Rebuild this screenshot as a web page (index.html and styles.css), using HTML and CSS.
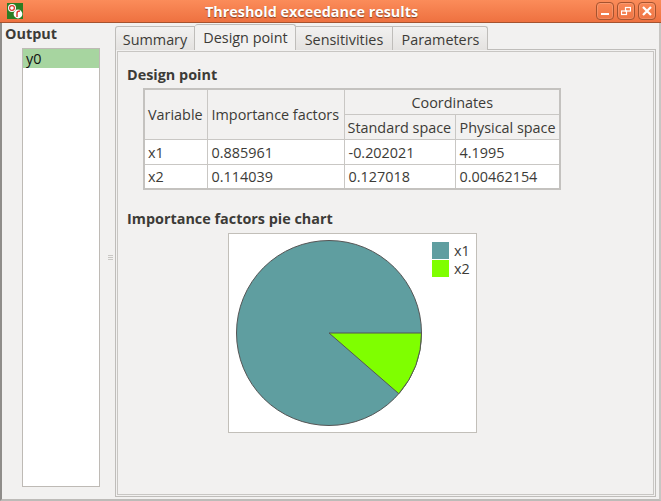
FILE: index.html
```html
<!DOCTYPE html>
<html lang="en">
<head>
<meta charset="UTF-8">
<title>Threshold exceedance results</title>
<link rel="stylesheet" href="styles.css">
</head>
<body>

<div class="window">
    <div class="titlebar">
        <svg class="app-icon" width="16" height="16" viewBox="0 0 16 16">
            <rect width="16" height="16" fill="#2c7d23"/>
            <circle cx="5" cy="5" r="4" fill="#fff"/>
            <circle cx="5" cy="5" r="2.4" fill="none" stroke="#d8352a" stroke-width="1.2"/>
            <circle cx="11" cy="11" r="4.4" fill="#fff"/>
            <path d="M10 14 L10 10 Q10 8 13 8" fill="none" stroke="#d8352a" stroke-width="1.4"/>
        </svg>
        <div class="title">Threshold exceedance results</div>
        <div class="win-buttons">
            <div class="win-btn">
                <svg width="10" height="10" viewBox="0 0 10 10"><rect x="1" y="7" width="8" height="2" fill="#fff"/></svg>
            </div>
            <div class="win-btn">
                <svg width="10" height="10" viewBox="0 0 10 10" fill="none" stroke="#fff" stroke-width="1.2"><rect x="4.5" y="1.5" width="5" height="3.5"/><rect x="0.5" y="5" width="5" height="3.5"/></svg>
            </div>
            <div class="win-btn">
                <svg width="10" height="10" viewBox="0 0 10 10" stroke="#fff" stroke-width="2.2"><path d="M1 1 L9 9 M9 1 L1 9"/></svg>
            </div>
        </div>
    </div>

    <div class="content">
        <div class="side">
            <div class="side-title">Output</div>
            <div class="list">
                <div class="list-item selected">y0</div>
            </div>
        </div>

        <div class="splitter"><span></span><span></span><span></span></div>

        <div class="tabs">
            <div class="tab-bar">
                <div class="tab tab-summary">Summary</div>
                <div class="tab active">Design point</div>
                <div class="tab tab-sens">Sensitivities</div>
                <div class="tab tab-params">Parameters</div>
            </div>
            <div class="pane">
                <div class="pane-inner">
                    <h3 class="group-title">Design point</h3>
                    <table class="results">
                        <tr>
                            <th rowspan="2" class="col-var">Variable</th>
                            <th rowspan="2" class="col-imp">Importance factors</th>
                            <th colspan="2" class="center">Coordinates</th>
                        </tr>
                        <tr>
                            <th class="col-std">Standard space</th>
                            <th class="col-phy">Physical space</th>
                        </tr>
                        <tr>
                            <td>x1</td>
                            <td>0.885961</td>
                            <td>-0.202021</td>
                            <td>4.1995</td>
                        </tr>
                        <tr>
                            <td>x2</td>
                            <td>0.114039</td>
                            <td>0.127018</td>
                            <td>0.00462154</td>
                        </tr>
                    </table>

                    <h3 class="group-title pie-title">Importance factors pie chart</h3>
                    <div class="chart">
                        <svg class="pie" width="188" height="188" viewBox="0 0 188 188">
                            <circle cx="94" cy="94" r="92.5" fill="#5f9ea0" stroke="#555" stroke-width="1"/>
                            <path d="M94 94 L186.5 94 A92.5 92.5 0 0 1 163.8 154.7 Z" fill="#7fff00" stroke="#555" stroke-width="1"/>
                        </svg>
                        <div class="legend">
                            <div class="legend-row"><span class="swatch swatch-x1"></span>x1</div>
                            <div class="legend-row"><span class="swatch swatch-x2"></span>x2</div>
                        </div>
                    </div>
                </div>
            </div>
        </div>
    </div>
</div>

</body>
</html>
```

FILE: styles.css
```css
html, body {
    margin: 0;
    padding: 0;
}
body {
    width: 661px;
    height: 501px;
    overflow: hidden;
    font-family: "Open Sans", "Noto Sans", sans-serif;
    font-size: 14.4px;
    color: #3c3b37;
    background-color: #f2f1f0;
}
.window {
    width: 661px;
    height: 501px;
    display: flex;
    flex-direction: column;
    box-sizing: border-box;
}
.titlebar {
    height: 23px;
    flex: none;
    display: flex;
    align-items: center;
    padding: 0 5px 0 7px;
    box-sizing: border-box;
    background: linear-gradient(#fb8c5a, #ee7140);
    border-bottom: 1px solid #a5532f;
}
.app-icon {
    flex: none;
}
.title {
    flex: 1;
    text-align: center;
    color: #fff;
    font-weight: bold;
    font-size: 14.4px;
    padding-left: 4px;
    text-shadow: 0 1px 1px #8a4020;
}
.win-buttons {
    display: flex;
    gap: 3px;
}
.win-btn {
    width: 18px;
    height: 18px;
    box-sizing: border-box;
    border: 1px solid #a5532f;
    border-radius: 4px;
    box-shadow: inset 0 0 0 1px rgba(255, 255, 255, 0.15);
    display: flex;
    align-items: center;
    justify-content: center;
}
.content {
    flex: 1;
    display: flex;
    min-height: 0;
    border-left: 2px solid #8f8d8a;
    border-bottom: 2px solid #bdbbb8;
    border-right: 2px solid #c8c6c3;
}
.side {
    width: 98px;
    flex: none;
    display: flex;
    flex-direction: column;
}
.side-title {
    font-weight: bold;
    line-height: 20px;
    padding: 1px 0 4px 3px;
}
.list {
    flex: 1;
    margin: 0 0 12px 20px;
    width: 78px;
    box-sizing: border-box;
    background-color: #fff;
    border: 1px solid #bebab5;
}
.list-item {
    height: 19px;
    line-height: 19px;
    padding-left: 3px;
    color: #111;
}
.selected {
    background-color: #a7d5a0;
}
.splitter {
    width: 15px;
    flex: none;
    display: flex;
    flex-direction: column;
    justify-content: center;
    align-items: center;
    gap: 1px;
    padding: 0 0 8px 5px;
    box-sizing: border-box;
}
.splitter span {
    width: 5px;
    height: 1px;
    background-color: #c9c7c4;
}
.tabs {
    flex: 1;
    display: flex;
    flex-direction: column;
    min-width: 0;
    margin-right: 3px;
    padding-top: 2px;
    padding-bottom: 2px;
}
.tab-bar {
    display: flex;
    height: 25px;
    flex: none;
    align-items: flex-end;
    margin-bottom: -1px;
    position: relative;
    z-index: 1;
}
.tab {
    height: 24px;
    line-height: 25px;
    box-sizing: border-box;
    text-align: center;
    border: 1px solid #bfbdba;
    border-bottom: none;
    border-left: none;
    background: linear-gradient(#f2f1f0, #e4e2e0);
}
.tab-summary {
    width: 80px;
    border-left: 1px solid #bfbdba;
    border-radius: 3px 0 0 0;
}
.active {
    width: 101px;
    height: 26px;
    line-height: 26px;
    padding-left: 1px;
    background: #f2f1f0;
    border-left: none;
    border-radius: 3px 3px 0 0;
}
.tab-sens {
    width: 97px;
}
.tab-params {
    width: 95px;
    padding-left: 1px;
    border-radius: 0 3px 0 0;
}
.pane {
    flex: 1;
    border: 1px solid #bfbdba;
    padding: 1px;
    min-height: 0;
}
.pane-inner {
    height: 100%;
    box-sizing: border-box;
    border: 1px solid #c8c6c3;
    padding: 14px 0 0 9px;
}
.group-title {
    margin: 0;
    font-size: 14.4px;
    line-height: 18px;
    font-weight: bold;
}
.results {
    margin: 4px 0 0 16px;
    border-collapse: collapse;
    border: 2px solid #c4c2bf;
    background-color: #fff;
}
.results th, .results td {
    border: 1px solid #c9c7c4;
    height: 25px;
    padding: 1px 3px 0 4px;
    box-sizing: border-box;
    font-weight: normal;
    text-align: left;
    white-space: nowrap;
}
.results th {
    background-color: #f2f1f0;
}
.results th:first-child, .results td:first-child {
    padding-left: 3px;
}
.results th.center {
    text-align: center;
}
.col-var {
    width: 63px;
}
.col-imp {
    width: 137px;
}
.col-std {
    width: 111px;
}
.col-phy {
    width: 105px;
}
.pie-title {
    margin-top: 20px;
}
.chart {
    margin: 5px 0 0 101px;
    width: 249px;
    height: 200px;
    box-sizing: border-box;
    border: 1px solid #c2bfb9;
    background-color: #fff;
    display: flex;
    padding: 5px 0 0 7px;
    gap: 9px;
}
.pie {
    flex: none;
    margin-left: -1px;
}
.legend {
    padding: 2px 0 0 0;
}
.legend-row {
    display: flex;
    align-items: center;
    height: 18px;
    gap: 4px;
}
.swatch {
    width: 17px;
    height: 17px;
    margin-right: 1px;
}
.swatch-x1 {
    background-color: #5f9ea0;
}
.swatch-x2 {
    background-color: #7fff00;
}
```
